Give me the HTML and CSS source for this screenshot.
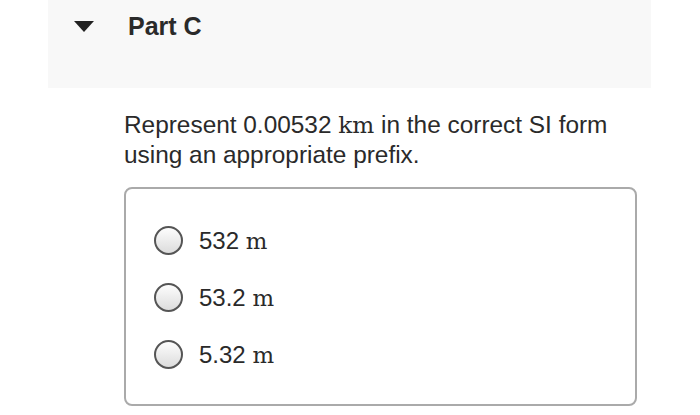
FILE: index.html
```html
<!DOCTYPE html>
<html lang="en">
<head>
    <meta charset="UTF-8">
    <title>Part C</title>
    <link rel="stylesheet" href="styles.css">
</head>
<body>
    <div class="part-header">
        <span class="toggle"></span>
        <h2>Part C</h2>
    </div>

    <div class="part-body">
        <p class="question">Represent 0.00532 <span class="math">km</span> in the correct SI form<br>using an appropriate prefix.</p>

        <div class="choices">
            <label class="choice"><span class="radio"></span><span>532 <span class="math">m</span></span></label>
            <label class="choice"><span class="radio"></span><span>53.2 <span class="math">m</span></span></label>
            <label class="choice"><span class="radio"></span><span>5.32 <span class="math">m</span></span></label>
        </div>
    </div>
</body>
</html>
```

FILE: styles.css
```css
/* Basic reset */
* {
    margin: 0;
    padding: 0;
    box-sizing: border-box;
}

body {
    background-color: white;
    font-family: 'Liberation Sans', Arial, sans-serif;
    color: #2a2a2a;
}

/* Collapsible part header */
.part-header {
    margin-left: 48px;
    width: 603px;
    height: 88px;
    background-color: #f8f8f8;
    display: flex;
    align-items: flex-start;
    padding: 11px 0 0 26px;
}

.toggle {
    width: 0;
    height: 0;
    margin-top: 10px;
    border-left: 10px solid transparent;
    border-right: 10px solid transparent;
    border-top: 11px solid #222;
}

.part-header h2 {
    margin-left: 34px;
    font-size: 25px;
    line-height: 30px;
    font-weight: bold;
}

/* Question and choices */
.part-body {
    padding: 22px 0 0 124px;
}

.question {
    width: 520px;
    font-size: 24.4px;
    line-height: 30px;
}

.math {
    font-family: 'DejaVu Serif', 'Liberation Serif', serif;
    font-size: 0.95em;
}

.choices {
    margin-top: 17px;
    width: 513px;
    height: 219px;
    border: 2px solid #aaa;
    border-radius: 8px;
    display: flex;
    flex-direction: column;
    gap: 28px;
    padding: 37px 0 0 28px;
}

.choice {
    display: flex;
    align-items: center;
    font-size: 24px;
    height: 29px;
}

.radio {
    width: 29px;
    height: 29px;
    border: 2px solid #555;
    border-radius: 50%;
    background: linear-gradient(#fdfdfd, #dcdcdc);
    margin-right: 16px;
}
```
